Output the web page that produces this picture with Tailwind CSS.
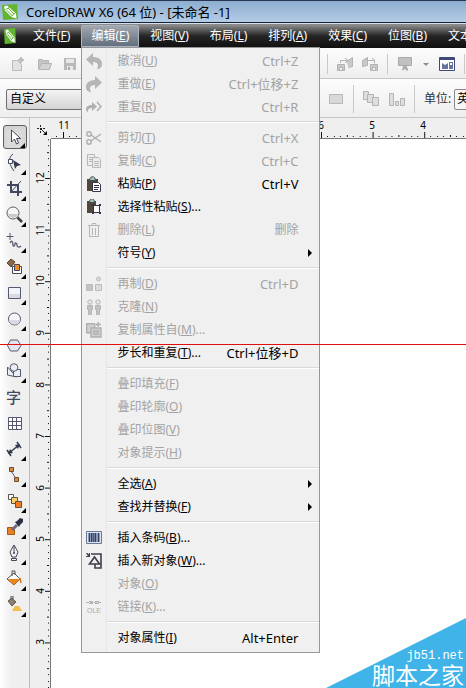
<!DOCTYPE html>
<html lang="zh-CN">
<head>
<meta charset="utf-8">
<meta name="viewport" content="width=device-width, initial-scale=1">
<title>CorelDRAW X6 (64 位) - [未命名 -1]</title>
<script src="https://cdn.jsdelivr.net/npm/@tailwindcss/browser@4"></script>
</head>
<body>
<div class="relative flex min-h-screen flex-col overflow-hidden bg-white font-['Noto_Sans','Noto_Sans_CJK_SC',sans-serif] text-[12px] leading-4 text-black">

<svg class="hidden" aria-hidden="true">
  <symbol id="logo" viewBox="0 0 16 16"><path fill="#62b52f" d="M0 1l15-1 1 15-15 1z"/><path fill="#fff" d="M2 2.500L5 1.500l9 8 .500 5-5-1.500-6.500-6.500z"/><path stroke="#62b52f" fill="none" d="M3.500 5.500l4-2M6 4l6 6M4.500 6l6 6M9.500 12l3.500-3"/></symbol>
  <symbol id="fly" viewBox="0 0 6 6"><path d="M6 0v6H0z"/></symbol>
</svg>

<header>
  <div class="flex h-[23px] items-center gap-2 border-t border-b border-t-[#273750] border-b-[#18222e] bg-linear-to-b from-[#8daed0] to-[#b4cce6] pl-[2px]">
    <svg class="size-4" viewBox="0 0 16 16"><use href="#logo"/></svg>
    <h1 class="text-[13px] whitespace-nowrap">CorelDRAW X6 (64 位) - [未命名 -1]</h1>
  </div>

  <nav class="flex h-[25px] items-center gap-px border-t border-[#d4e0ee] bg-linear-to-b from-[#8b8b8b] from-5% via-[#252525] via-50% to-[#101010] pl-1 whitespace-nowrap text-white">
    <svg class="mr-[6px] h-4 w-3 shrink-0" viewBox="0 0 16 16" preserveAspectRatio="none"><use href="#logo"/></svg>
    <button class="h-[22px] px-[10px]">文件(<u>F</u>)</button>
    <div class="relative">
      <button class="h-[22px] rounded-t-xs border border-[#a9b5c4] bg-linear-to-b from-[#a1a7af] to-[#64707e] px-[9px]" aria-haspopup="menu" aria-expanded="true">编辑(<u>E</u>)</button>
      <div role="menu" class="absolute top-[22px] left-0 z-10 w-[239px] border border-[#979797] bg-[#f0f0f0] bg-linear-to-r from-transparent from-[24px] via-[#dcdcdc] via-[24px] to-transparent to-[25px] pt-px pb-[3px] text-black [&_button]:flex [&_button]:h-[23px] [&_button]:w-full [&_button]:items-center [&_button]:pr-[21px] [&_button]:pl-1 [&_button:disabled]:text-[#a3a3a3] [&_hr]:my-[3px] [&_hr]:ml-[25px] [&_hr]:h-[2px] [&_hr]:border-t-[#d9d9d9] [&_hr]:bg-white [&_kbd]:ml-auto [&_kbd]:font-['Noto_Sans','Noto_Sans_CJK_SC',sans-serif] [&_kbd]:text-[13px] [&_svg]:mr-[15px] [&_svg]:size-4 [&_svg]:shrink-0">
        <button role="menuitem" disabled><svg viewBox="0 0 16 16"><path fill="#b5b5b5" d="M7 0v4c6 0 9 3 9 7 0 3-2 5-5 5 2-4 1-7-4-7v4L0 6.500z"/></svg>撤消(<u>U</u>)<kbd>Ctrl+Z</kbd></button>
        <button role="menuitem" disabled><svg viewBox="0 0 16 16"><path fill="#b5b5b5" d="M9 0v4C3 4 0 7 0 11c0 3 2 5 5 5-2-4-1-7 4-7v4l7-6.500z"/></svg>重做(<u>E</u>)<kbd>Ctrl+位移+Z</kbd></button>
        <button role="menuitem" disabled><svg viewBox="0 0 16 16"><path fill="#b0b0b0" d="M6 3v3C2 6 0 8 0 10c0 2 1 3 2 3 0-3 1-4 4-4v3l5-4.500z"/><path fill="none" stroke="#b0b0b0" stroke-width="1.500" d="M11 3l4 4.500L11 12"/></svg>重复(<u>R</u>)<kbd>Ctrl+R</kbd></button>
        <hr>
        <button role="menuitem" disabled><svg viewBox="0 0 16 16" fill="none" stroke="#b0b0b0" stroke-width="1.500"><circle cx="3" cy="4" r="2.200"/><circle cx="3" cy="12" r="2.200"/><path d="M5 5l10 7M5 11l10-7"/></svg>剪切(<u>T</u>)<kbd>Ctrl+X</kbd></button>
        <button role="menuitem" disabled><svg viewBox="0 0 16 16" fill="#ededed" stroke="#b8b8b8"><path d="M1.500 1.500h7v11h-7zM3 4.500h4M3 6.500h4M3 8.500h4"/><path d="M6.500 4.500h6l2 2v8h-8zM8 8.500h5M8 10.500h5M8 12.500h5"/></svg>复制(<u>C</u>)<kbd>Ctrl+C</kbd></button>
        <button role="menuitem"><svg viewBox="0 0 16 16"><path fill="#51473a" d="M1 3h11v12H1z"/><path fill="#9dc0bd" stroke="#46504a" d="M3.500 4.500c0-5 6-5 6 0z"/><path fill="#fff" stroke="#34344d" d="M6.500 6.500h6l2 2v7h-8z"/><path stroke="#34344d" d="M8 9.500h5M8 11.500h5M8 13.500h4"/></svg>粘贴(<u>P</u>)<kbd>Ctrl+V</kbd></button>
        <button role="menuitem"><svg viewBox="0 0 16 16"><path fill="#51473a" d="M1 2h9v12H1z"/><path fill="#9dc0bd" stroke="#46504a" d="M3.500 3.500c0-5 5-5 5 0z"/><path fill="#fff" stroke="#34344d" d="M7.500 6.500h6v7h-6z"/><path fill="#34344d" d="M6 5h2v2H6zM13 5h2v2h-2zM6 13h2v2H6zM13 13h2v2h-2z"/></svg>选择性粘贴(<u>S</u>)...</button>
        <button role="menuitem" disabled><svg viewBox="0 0 16 16" fill="none" stroke="#b5b5b5"><path d="M2 3.500h12M6 3V1.500h4V3M3.500 4v10.500h9V4M6.500 6v7M9.500 6v7"/></svg>删除(<u>L</u>)<kbd class="text-[12px]!">删除</kbd></button>
        <button role="menuitem" aria-haspopup="menu" class="pr-[7px]!"><svg></svg>符号(<u>Y</u>)<span class="ml-auto border-y-4 border-l-4 border-y-transparent border-l-black"></span></button>
        <hr>
        <button role="menuitem" disabled><svg viewBox="0 0 16 16" fill="#dcdcdc" stroke="#bbb"><path fill="#c4c4c4" d="M.5 8.500h6v6h-6z"/><path d="M9.500 8.500h6v6h-6z"/><circle cx="12.500" cy="3" r="2"/></svg>再制(<u>D</u>)<kbd>Ctrl+D</kbd></button>
        <button role="menuitem" disabled><svg viewBox="0 0 16 16" fill="#c2c2c2" stroke="#b5b5b5"><circle cx="4" cy="3" r="2.200" fill="#e8e8e8"/><circle cx="12" cy="3" r="2.200" fill="#e8e8e8"/><path d="M1.500 6.500h5v4h-1v5h-3v-5h-1zM9.500 6.500h5v4h-1v5h-3v-5h-1z"/></svg>克隆(<u>N</u>)</button>
        <button role="menuitem" disabled><svg viewBox="0 0 16 16" fill="#cfcfcf" stroke="#b0b0b0" stroke-width="1.400"><path d="M.7 1.700h8v9h-8z"/><path d="M5 6h10v9H5zM8 9h4v3H8z"/><path fill="none" d="M15 2.500h-4M13 .5l-2.500 2 2.500 2"/></svg>复制属性自(<u>M</u>)...</button>
        <button role="menuitem"><svg></svg>步长和重复(<u>T</u>)...<kbd>Ctrl+位移+D</kbd></button>
        <hr>
        <button role="menuitem" disabled><svg></svg>叠印填充(<u>F</u>)</button>
        <button role="menuitem" disabled><svg></svg>叠印轮廓(<u>O</u>)</button>
        <button role="menuitem" disabled><svg></svg>叠印位图(<u>V</u>)</button>
        <button role="menuitem" disabled><svg></svg>对象提示(<u>H</u>)</button>
        <hr>
        <button role="menuitem" aria-haspopup="menu" class="pr-[7px]!"><svg></svg>全选(<u>A</u>)<span class="ml-auto border-y-4 border-l-4 border-y-transparent border-l-black"></span></button>
        <button role="menuitem" aria-haspopup="menu" class="pr-[7px]!"><svg></svg>查找并替换(<u>F</u>)<span class="ml-auto border-y-4 border-l-4 border-y-transparent border-l-black"></span></button>
        <hr>
        <button role="menuitem"><svg viewBox="0 0 16 16"><path fill="#dbe5f3" stroke="#6b7893" d="M.5 1.500h15v12H.5z"/><path fill="#8f9cb8" d="M2 3h12v9H2z"/><path stroke="#33405f" d="M3.500 3v9M5.500 3v9M9.500 3v9M12.500 3v9"/><path stroke="#4d5a7a" stroke-width="2" d="M7.500 3v9"/></svg>插入条码(<u>B</u>)...</button>
        <button role="menuitem"><svg viewBox="0 0 16 16" fill="none" stroke="#3f3f4d"><path stroke-width="1.600" d="M5 1h10v14H9v-4M3.500 11l5-7 5 7z"/><path fill="#3f3f4d" stroke="none" d="M0 0l1-.5 2 2V0h1v4H0V3h2z"/></svg>插入新对象(<u>W</u>)...</button>
        <button role="menuitem" disabled><svg></svg>对象(<u>O</u>)</button>
        <button role="menuitem" disabled><svg viewBox="0 0 16 16" fill="none" stroke="#b5b5b5"><path d="M0 3.500h16" stroke-dasharray="3 1"/><path d="M3 2.500h4M9 2.500h4M3 4.500h4M9 4.500h4"/><text x="1" y="14" font-family="Liberation Sans" font-size="7" fill="#aaa" stroke="none">OLE</text></svg>链接(<u>K</u>)...</button>
        <hr>
        <button role="menuitem"><svg></svg>对象属性(<u>I</u>)<kbd>Alt+Enter</kbd></button>
      </div>
    </div>
    <button class="h-[22px] px-[10px]">视图(<u>V</u>)</button>
    <button class="h-[22px] px-[10px]">布局(<u>L</u>)</button>
    <button class="h-[22px] px-[10px]">排列(<u>A</u>)</button>
    <button class="h-[22px] px-[10px]">效果(<u>C</u>)</button>
    <button class="h-[22px] px-[10px]">位图(<u>B</u>)</button>
    <button class="h-[22px] px-[10px]">文本(<u>T</u>)</button>
  </nav>

  <div class="flex h-[31px] items-center border-b border-[#c6c6c6] bg-linear-to-b from-[#fcfcfc] to-[#eeeeee] pt-[2px] [&_button]:shrink-0 [&_svg]:block">
    <div class="flex w-[327px] shrink-0 gap-[10px] pl-[10px]">
      <button aria-label="新建"><svg class="size-4" viewBox="0 0 16 16" fill="#e2e2e2" stroke="#b9b9b9"><path d="M2.500 4.500h5l4 4v6h-9z"/><path fill="#bbb" d="M11 1l1 2 2 1-2 1-1 2-1-2-2-1 2-1z"/></svg></button>
      <button aria-label="打开"><svg class="size-4" viewBox="0 0 16 16" fill="#c4c4c4" stroke="#b5b5b5"><path d="M2.500 13V3.500h4l1 1h5V7"/><path fill="#d2d2d2" d="M2.500 13.500l3-6h10l-2 6z"/></svg></button>
      <button aria-label="保存"><svg class="size-4" viewBox="0 0 16 16"><path fill="#b9b9b9" d="M2 2h12v12H2z"/><path fill="#e8e8e8" d="M4 3h8v4H4zM5 10h6v4H5z"/><path fill="#aaa" d="M6 11h2v3H6z"/></svg></button>
    </div>
    <span class="mr-[9px] h-5 w-px shrink-0 bg-[#c8c8c8]"></span>
    <button aria-label="导入"><svg class="size-4" viewBox="0 0 16 16" fill="#c9c9c9" stroke="#b3b3b3"><path d="M.5 8.500h7v6h-7z"/><path d="M9.500 5.500l6-4v9l-4 1"/><path fill="none" d="M3.500 7V4.500h7M8 2l3 2.500L8 7"/><path fill="#f4f4f4" d="M2.500 11.500h3v3h-3z"/></svg></button>
    <button class="ml-[9px]" aria-label="导出"><svg class="size-4" viewBox="0 0 16 16" fill="#c9c9c9" stroke="#b3b3b3"><path d="M.5 4.500l5-3v8l-5 1zM8.500 8.500h7v6h-7z"/><path fill="none" d="M4 4.500h8.500v3M10 2l3 2.500"/><path fill="#f4f4f4" d="M10.500 11.500h3v3h-3z"/></svg></button>
    <span class="mx-[9px] h-5 w-px shrink-0 bg-[#c8c8c8]"></span>
    <button aria-label="应用程序启动器"><svg class="size-4" viewBox="0 0 16 16"><path fill="#c1c1c1" stroke="#aaa" d="M1.500 1.500h13v8h-13z"/><path fill="#aeaeae" d="M6 10h4v5l-2-2-3 2zM8 12h3v3z"/></svg></button>
    <button class="ml-[10px]" aria-label="更多程序"><svg class="h-4 w-[6px]" viewBox="0 0 6 16"><path fill="#8c8c8c" d="M0 7h6l-3 3z"/></svg></button>
    <button class="ml-[10px]" aria-label="欢迎屏幕"><svg class="size-4" viewBox="0 0 16 16"><path fill="#fff" stroke="#3d4a78" d="M.5 1.500h15v13H.5z"/><path fill="#3d4a78" d="M1 1h14v3H1z"/><path fill="#66739f" d="M3 7l3 2 3-2v6H3zM10 6h4v7h-4z"/><path fill="#fff" d="M11 7h2v2h-2z"/></svg></button>
    <span class="ml-[9px] h-5 w-px shrink-0 bg-[#c8c8c8]"></span>
  </div>

  <div class="flex h-[39px] items-center border-b border-[#c6c6c6] bg-linear-to-b from-[#fcfcfc] to-[#eeeeee] pt-[2px] whitespace-nowrap">
    <div class="w-[328px] shrink-0 pl-[6px]">
      <select aria-label="页面大小" class="h-[21px] w-[110px] appearance-none rounded-xs border border-[#707070] bg-linear-to-b from-[#f4f4f4] to-[#d4d4d4] pl-[3px]"><option>自定义</option></select>
    </div>
    <button class="shrink-0" aria-label="所有页面"><svg class="size-4" viewBox="0 0 16 16"><path fill="#d9d9d9" stroke="#b8b8b8" d="M1.500 3.500h13v9h-13z"/></svg></button>
    <span class="mx-[9px] h-7 w-px shrink-0 bg-[#c8c8c8]"></span>
    <button class="shrink-0" aria-label="堆叠"><svg class="size-4" viewBox="0 0 16 16" fill="#dedede" stroke="#b3b3b3"><path d="M.5.5h5v8h-5z"/><path d="M4.500 3.500h6v8h-6z"/><path d="M9.500 6.500h6v8h-6z"/></svg></button>
    <button class="ml-[10px] shrink-0" aria-label="对齐"><svg class="size-4" viewBox="0 0 16 16" fill="#dedede" stroke="#b3b3b3"><path d="M.5 2.500h4v12h-4zM6.500 10.500h3v4h-3zM11.500 7.500h4v7h-4z"/></svg></button>
    <span class="mx-[9px] h-7 w-px shrink-0 bg-[#c8c8c8]"></span>
    <label for="unit" class="text-[#333]">单位:</label>
    <select id="unit" class="ml-[3px] h-[21px] w-[70px] shrink-0 appearance-none rounded-xs border border-[#8a8a8a] bg-[#f6f6f6] pl-[2px]"><option>英寸</option></select>
  </div>
</header>

<div class="flex flex-1">
  <aside class="flex w-[30px] shrink-0 flex-col gap-[2px] border-r border-[#bdbdbd] bg-linear-to-r from-white to-[#efefef] to-40% pt-[7px] pl-[3px] [&_button]:relative [&_button]:h-6 [&_button]:w-6 [&_button]:pl-[3px] [&_.fly]:absolute [&_.fly]:right-px [&_.fly]:bottom-0 [&_.fly]:size-[5px] [&_.ic]:size-[18px]">
    <button aria-label="选择" class="rounded-[3px] border border-[#5f5f5f] bg-[#dadada] shadow-inner"><svg class="ic" viewBox="0 0 18 18"><path fill="#fff" stroke="#44485e" d="M4.500 2v12l3-3 2 5 2-1-2-4.500h4z"/></svg><svg class="fly"><use href="#fly"/></svg></button>
    <button aria-label="形状"><svg class="ic" viewBox="0 0 18 18"><path fill="none" stroke="#44485e" d="M7 0C1 4 4 12 8 17"/><path fill="#fff" stroke="#44485e" d="M2.500 5.500h4v4h-4z"/><path fill="#34384e" d="M7 6l8 5-4 1-2 3z"/></svg><svg class="fly"><use href="#fly"/></svg></button>
    <button aria-label="裁剪"><svg class="ic" viewBox="0 0 18 18"><path fill="none" stroke="#44485e" stroke-width="2" d="M5 1v11h11M1 5h11v11"/><path stroke="#44485e" d="M15 1L5 12"/></svg><svg class="fly"><use href="#fly"/></svg></button>
    <button aria-label="缩放"><svg class="ic" viewBox="0 0 18 18"><circle cx="7" cy="7" r="6" fill="#f6f6f6" stroke="#60606a"/><path fill="#c9c9cf" d="M2 8h10c-1 5-9 5-10 0z"/><path stroke="#3c3c44" stroke-width="2.500" d="M11.500 11.500L16 16"/></svg><svg class="fly"><use href="#fly"/></svg></button>
    <button aria-label="手绘"><svg class="ic" viewBox="0 0 18 18" fill="none" stroke="#55586e"><path d="M4 1v7M.5 4.500h7"/><path stroke-width="1.300" d="M4 11c2-4 3 0 3 2s2 1 2-1 2-1 2 1 2 3 4 1"/></svg><svg class="fly"><use href="#fly"/></svg></button>
    <button aria-label="智能填充"><svg class="ic" viewBox="0 0 18 18"><path fill="#8a6644" stroke="#57432f" d="M1 5l4-4 4 3-4 5z"/><path fill="#fff" stroke="#44485e" d="M6.500 8.500h9v7h-9z"/><path fill="#f08a24" stroke="#44485e" d="M8.500 6.500h5v6h-5z"/></svg><svg class="fly"><use href="#fly"/></svg></button>
    <button aria-label="矩形"><svg class="ic" viewBox="0 0 18 18"><path fill="#f2f3f8" stroke="#55586e" d="M2.500 3.500h12v11h-12z"/><path fill="#d8dae6" d="M3 10h11v4H3z"/></svg><svg class="fly"><use href="#fly"/></svg></button>
    <button aria-label="椭圆形"><svg class="ic" viewBox="0 0 18 18"><circle cx="8.500" cy="9" r="6" fill="#f6f7fb" stroke="#55586e"/><path fill="#d8dae6" d="M3 10h11c-1 6-10 6-11 0z"/></svg><svg class="fly"><use href="#fly"/></svg></button>
    <button aria-label="多边形"><svg class="ic" viewBox="0 0 18 18"><path fill="#e3e5ee" stroke="#55586e" d="M4.500 4h7l3.500 5.500-3.500 5.500h-7L1.500 9.500z"/></svg><svg class="fly"><use href="#fly"/></svg></button>
    <button aria-label="基本形状"><svg class="ic" viewBox="0 0 18 18" fill="#eceef5" stroke="#55586e"><path d="M1.500 5v8l9 2z"/><path d="M7.500 7.500h7v7h-7z"/><circle cx="8" cy="5.500" r="3.800"/></svg><svg class="fly"><use href="#fly"/></svg></button>
    <button aria-label="文本" class="text-left text-[15px] leading-6 font-medium text-[#44485e]">字</button>
    <button aria-label="表格"><svg class="ic" viewBox="0 0 18 18"><path fill="#fff" stroke="#55586e" d="M2.500 3.500h13v12h-13zM3 7.500h12M3 11.500h12M6.500 4v11M10.500 4v11"/></svg></button>
    <button aria-label="度量"><svg class="ic" viewBox="0 0 18 18"><path stroke="#34384e" stroke-width="1.500" d="M3 13L13 5M1 10l4 6M11 2l4 6"/><path fill="#34384e" d="M2 14l2-5 3 4zM14 4l-2 5-3-4z"/></svg><svg class="fly"><use href="#fly"/></svg></button>
    <button aria-label="连接器"><svg class="ic" viewBox="0 0 18 18"><path stroke="#55586e" d="M5 5l6 9"/><path fill="#d98a3d" stroke="#6b4c2e" d="M3.500 1.500h4v4h-4zM8.500 11.500h4v4h-4z"/></svg><svg class="fly"><use href="#fly"/></svg></button>
    <button aria-label="调和"><svg class="ic" viewBox="0 0 18 18" stroke="#5f5246"><path fill="#fff" d="M2.500 2.500h5v5h-5z"/><path fill="#f9cf6a" d="M5.500 5.500h6v6h-6z"/><path fill="#f57a1c" d="M9.500 9.500h6v6h-6z"/></svg><svg class="fly"><use href="#fly"/></svg></button>
    <button aria-label="颜色滴管"><svg class="ic" viewBox="0 0 18 18"><path fill="#e8821e" stroke="#a65a16" d="M1.500 9.500h7v7h-7z"/><path stroke="#6a6d80" stroke-width="3" d="M6 12l5-5"/><path fill="#2c3044" d="M9 4l2-1 3-3 3 1v3l-3 3-1 2z"/></svg><svg class="fly"><use href="#fly"/></svg></button>
    <button aria-label="轮廓笔"><svg class="ic" viewBox="0 0 18 18"><path fill="#f3f3f6" stroke="#44485e" d="M8 1l4 7-2 5H6L4 8zM8 2v7M5.500 14.500h5v2h-5z"/><circle cx="8" cy="9" r="1" fill="#44485e"/></svg><svg class="fly"><use href="#fly"/></svg></button>
    <button aria-label="填充"><svg class="ic" viewBox="0 0 18 18"><path fill="#fff" stroke="#55504a" d="M1 9l7-6 6 6-6 6z"/><path fill="#ee821c" d="M1.500 9H14l-6 6z"/><path fill="none" stroke="#55504a" d="M6 6V1h3v4"/><path stroke="#d8741c" stroke-width="1.500" d="M14 8l1 5"/></svg><svg class="fly"><use href="#fly"/></svg></button>
    <button aria-label="交互式填充"><svg class="ic" viewBox="0 0 18 18"><path fill="#8a8074" stroke="#625a50" d="M2 5l4-3 4 4-4 4z"/><path fill="none" stroke="#555" d="M5 4V0h2v3"/><path fill="#f5bd4a" d="M6 15l3-5h4l3 5z"/></svg><svg class="fly"><use href="#fly"/></svg></button>
  </aside>

  <main class="grid flex-1 grid-cols-[21px_1fr] grid-rows-[21px_1fr] bg-white">
    <div class="bg-[#efefef] pt-[7px] pl-[7px]">
      <svg class="size-3" viewBox="0 0 12 12"><path stroke="#222" stroke-dasharray="2 1" fill="none" d="M3.500 0v9M0 3.500h9"/><path stroke="#222" d="M4 4l5 5"/><path d="M10 6v4H6z"/></svg>
    </div>
    <svg class="h-[21px] w-full border-b border-[#777] bg-[#efefef] font-['Noto_Sans',sans-serif] text-[10px]" shape-rendering="crispEdges">
      <defs><pattern id="hx" x="12" y="0" width="51.600" height="20" patternUnits="userSpaceOnUse"><path fill="#111" d="M0 14h1v6H0zM6 18h1v1H6zM13 18h1v1h-1zM19 18h1v1h-1zM26 17h1v2h-1zM32 18h1v1h-1zM39 18h1v1h-1zM45 18h1v1h-1z"/></pattern></defs>
      <rect width="100%" height="20" fill="url(#hx)"/>
      <g text-anchor="middle"><text x="13" y="11">11</text><text x="270" y="11">6</text><text x="321" y="11">5</text><text x="372" y="11">4</text></g>
    </svg>
    <svg class="h-full w-[21px] border-r border-[#777] bg-[#efefef] font-['Noto_Sans',sans-serif] text-[10px]" shape-rendering="crispEdges">
      <defs><pattern id="vx" x="0" y="39" width="20" height="51.600" patternUnits="userSpaceOnUse"><path fill="#111" d="M15 0h5v1h-5zM18 6h1v1h-1zM18 13h1v1h-1zM18 19h1v1h-1zM17 26h2v1h-2zM18 32h1v1h-1zM18 39h1v1h-1zM18 45h1v1h-1z"/></pattern></defs>
      <rect width="20" height="100%" fill="url(#vx)"/>
      <g text-anchor="middle">
        <text transform="translate(14 39) rotate(-90)">12</text><text transform="translate(14 91) rotate(-90)">11</text><text transform="translate(14 142) rotate(-90)">10</text><text transform="translate(14 194) rotate(-90)">9</text><text transform="translate(14 246) rotate(-90)">8</text><text transform="translate(14 297) rotate(-90)">7</text><text transform="translate(14 349) rotate(-90)">6</text><text transform="translate(14 400) rotate(-90)">5</text><text transform="translate(14 452) rotate(-90)">4</text><text transform="translate(14 503) rotate(-90)">3</text>
      </g>
    </svg>
    <div></div>
  </main>
</div>

<div class="absolute inset-x-0 top-[344px] z-20 h-px bg-[#e00f0f]"></div>

<div class="absolute right-0 bottom-0 h-[70px] w-[140px] bg-[#40b4e8] [clip-path:polygon(100%_0,100%_100%,0_100%)]"></div>
<div class="absolute right-[2px] bottom-0 text-right whitespace-nowrap text-white">
  <p class="font-['Liberation_Mono',monospace] text-[12px] leading-3">jb51.net</p>
  <p class="text-[23px] leading-[26px]">脚本之家</p>
</div>
</div>
</body>
</html>
